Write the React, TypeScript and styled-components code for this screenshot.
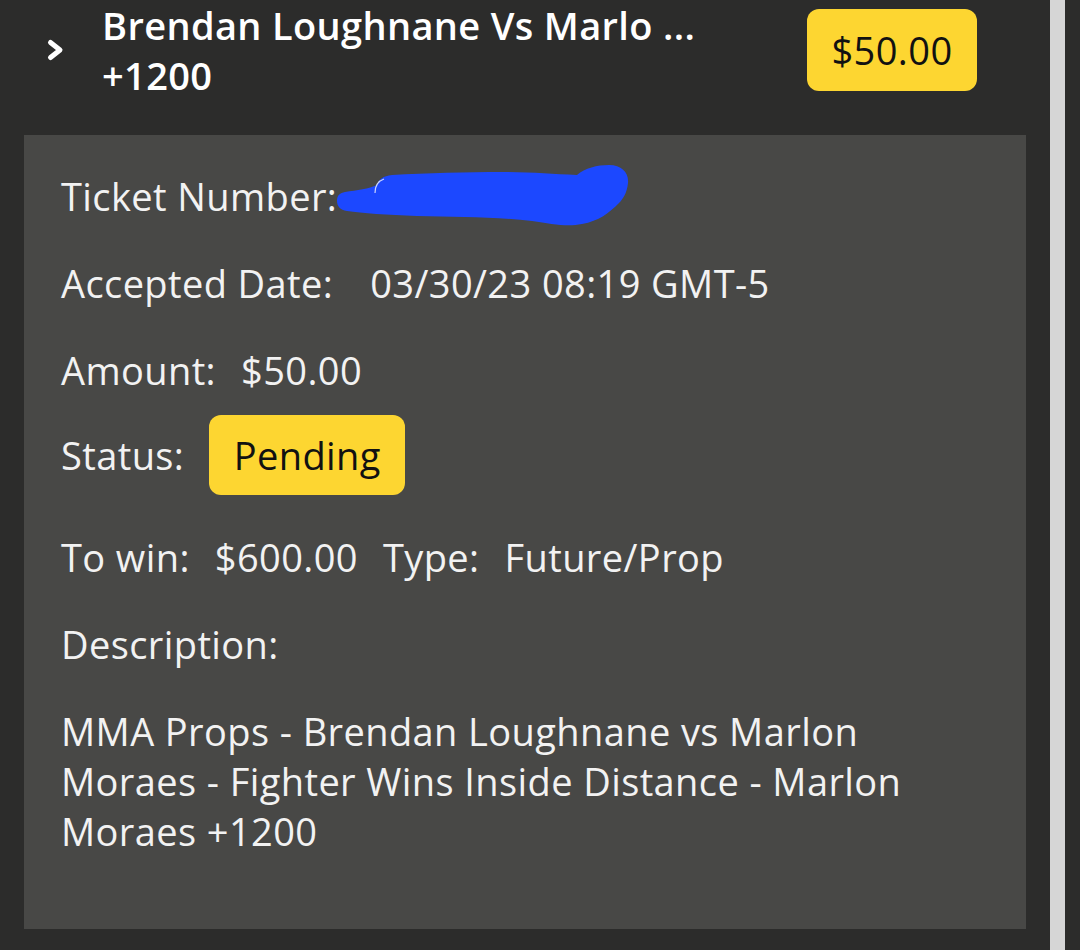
import React from "react";
import styled, { createGlobalStyle } from "styled-components";

const Global = createGlobalStyle`
  html, body { margin: 0; padding: 0; background: #2c2c2b; }
  body { font-family: "Open Sans", "Liberation Sans", sans-serif; overflow: hidden; }
`;

const Page = styled.div`
  display: flex;
  width: 1080px;
  height: 950px;
  background: #2c2c2b;
  overflow: hidden;
`;

const Main = styled.div`
  flex: 1;
  display: flex;
  flex-direction: column;
`;

const ScrollTrack = styled.div`
  width: 15px;
  background: #d6d6d6;
  margin-right: 15px;
`;

const Header = styled.div`
  display: flex;
  align-items: center;
  height: 100px;
  padding-left: 44px;
  padding-right: 73px;
`;

const Chevron = styled.svg`
  width: 20px;
  height: 24px;
  flex-shrink: 0;
  margin-right: 38px;
`;

const Title = styled.div`
  flex: 1;
  color: #ffffff;
  font-weight: 600;
  font-size: 38px;
  letter-spacing: 0.35px;
  line-height: 50px;
`;

const Badge = styled.div<{ $w: number; $h: number }>`
  display: flex;
  align-items: center;
  justify-content: center;
  width: ${(p) => p.$w}px;
  height: ${(p) => p.$h}px;
  background: #fdd631;
  color: #111;
  border-radius: 12px;
  font-size: 38px;
  letter-spacing: 0.4px;
  font-weight: 400;
`;

const Panel = styled.div`
  margin: 35px 24px 0 24px;
  background: #484846;
  padding: 36px 37px 73px 37px;
  display: flex;
  flex-direction: column;
  gap: 37px;
  color: #f2f2f2;
  font-size: 38px;
  letter-spacing: 0.4px;
  line-height: 50px;
`;

const Row = styled.div<{ $pull?: number }>`
  display: flex;
  align-items: center;
  gap: 25px;
  height: ${(p) => (p.$pull ? 80 : 50)}px;
  margin-top: ${(p) => (p.$pull ? -p.$pull : 0)}px;
  white-space: nowrap;
`;

const Label = styled.span<{ $extra?: number }>`
  margin-right: ${(p) => p.$extra || 0}px;
`;

const Value = styled.span``;

const Scribble = styled.svg`
  margin: -8px 0 -7px -25px;
  width: 292px;
  height: 65px;
  flex-shrink: 0;
`;

const Desc = styled.div`
  white-space: normal;
`;

export default function App() {
  return (
    <>
      <Global />
      <Page>
        <Main>
          <Header>
            <Chevron viewBox="0 0 20 24">
              <path d="M6.5 4.5 L16 12 L6.5 19.5" fill="none" stroke="#fff" strokeWidth="5" strokeLinecap="round" strokeLinejoin="round" />
            </Chevron>
            <Title>
              Brendan Loughnane Vs Marlo ...
              <br />
              +1200
            </Title>
            <Badge $w={170} $h={82}>$50.00</Badge>
          </Header>
          <Panel>
            <Row>
              <Label>Ticket Number:</Label>
              <Scribble viewBox="0 0 292 65">
                <path
                  d="M0 38 C0 32 3 30 8 29 C20 27 32 26 40 22 C42 16 46 13 55 12 C90 10 130 9 165 9 C195 9 215 11 240 12 C248 5 260 2 272 2 C285 2 292 10 291 20 C290 30 286 36 282 40 C272 50 262 58 245 61 C230 64 215 61 195 58 C160 54 120 54 80 53 C50 52 25 50 10 48 C3 47 0 43 0 38 Z"
                  fill="#1c48ff"
                />
                <path d="M38 30 C38 22 41 18 47 16" fill="none" stroke="#c9d3ff" strokeWidth="1.2" />
              </Scribble>
            </Row>
            <Row>
              <Label $extra={12}>Accepted Date:</Label>
              <Value>03/30/23 08:19 GMT-5</Value>
            </Row>
            <Row>
              <Label>Amount:</Label>
              <Value>$50.00</Value>
            </Row>
            <Row $pull={17}>
              <Label>Status:</Label>
              <Badge $w={196} $h={80}>Pending</Badge>
            </Row>
            <Row>
              <Label>To win:</Label>
              <Value>$600.00</Value>
              <Label>Type:</Label>
              <Value>Future/Prop</Value>
            </Row>
            <Row>
              <Label>Description:</Label>
            </Row>
            <Desc>
              MMA Props - Brendan Loughnane vs Marlon
              <br />
              Moraes - Fighter Wins Inside Distance - Marlon
              <br />
              Moraes +1200
            </Desc>
          </Panel>
        </Main>
        <ScrollTrack />
      </Page>
    </>
  );
}
